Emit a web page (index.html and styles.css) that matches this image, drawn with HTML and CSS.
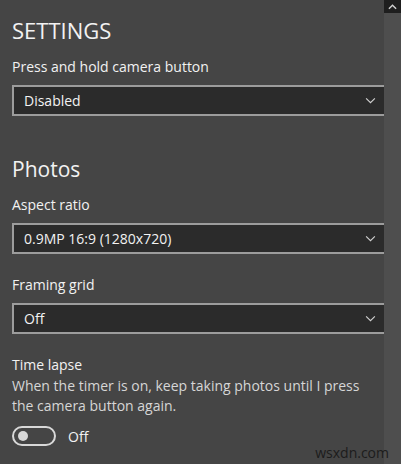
FILE: index.html
```html
<!DOCTYPE html>
<html lang="en">
<head>
    <meta charset="UTF-8">
    <meta name="viewport" content="width=device-width, initial-scale=1.0">
    <title>Camera Settings</title>
    <link rel="stylesheet" href="styles.css">
</head>
<body>

    <div class="window">
        <!-- Settings panel -->
        <div class="panel">
            <h1 class="title">SETTINGS</h1>

            <div class="label">Press and hold camera button</div>
            <div class="dropdown">
                <span>Disabled</span>
                <svg class="chevron" viewBox="0 0 12 8"><path d="M1 1.5 L6 6.5 L11 1.5"/></svg>
            </div>

            <h2 class="section">Photos</h2>

            <div class="label first">Aspect ratio</div>
            <div class="dropdown">
                <span>0.9MP 16:9 (1280x720)</span>
                <svg class="chevron" viewBox="0 0 12 8"><path d="M1 1.5 L6 6.5 L11 1.5"/></svg>
            </div>

            <div class="label spaced">Framing grid</div>
            <div class="dropdown">
                <span>Off</span>
                <svg class="chevron" viewBox="0 0 12 8"><path d="M1 1.5 L6 6.5 L11 1.5"/></svg>
            </div>

            <div class="label spaced">Time lapse</div>
            <p class="desc">When the timer is on, keep taking photos until I press the camera button again.</p>
            <div class="toggle-row">
                <div class="toggle"><div class="knob"></div></div>
                <span>Off</span>
            </div>
        </div>

        <!-- Scrollbar -->
        <div class="scrollbar">
            <div class="scroll-up">
                <svg viewBox="0 0 10 6"><path d="M1 5 L5 1 L9 5"/></svg>
            </div>
        </div>
    </div>

    <div class="watermark">wsxdn.com</div>

</body>
</html>
```

FILE: styles.css
```css
body {
    margin: 0;
    padding: 0;
    background-color: #454545;
    font-family: "Open Sans", "Noto Sans", sans-serif;
    color: #f2f2f2;
    width: 401px;
    height: 464px;
    overflow: hidden;
    position: relative;
}

.window {
    display: flex;
    height: 464px;
}

.panel {
    flex: 1;
    padding: 14px 0 0 12px;
    overflow: hidden;
}

.title {
    margin: 0;
    font-size: 22px;
    font-weight: 400;
    line-height: 32px;
}

.label {
    margin-top: 11px;
    font-size: 14px;
    line-height: 20px;
}

.label.first {
    margin-top: 9px;
}

.label.spaced {
    margin-top: 21px;
}

.dropdown {
    margin-top: 8px;
    height: 27px;
    border: 2px solid #9c9c9c;
    border-right: none;
    background-color: #2b2b2b;
    display: flex;
    align-items: center;
    justify-content: space-between;
    padding-left: 10px;
    font-size: 14px;
}

.chevron {
    width: 11px;
    height: 7px;
    margin-right: 8px;
    fill: none;
    stroke: #d0d0d0;
    stroke-width: 1.3;
}

.section {
    margin: 36px 0 0 0;
    font-size: 21px;
    font-weight: 400;
    line-height: 34px;
}

.desc {
    margin: 1px 0 0 0;
    font-size: 14px;
    line-height: 20px;
    color: #d6d6d6;
    padding-right: 16px;
}

.toggle-row {
    margin-top: 10px;
    display: flex;
    align-items: center;
    gap: 12px;
    font-size: 14px;
}

.toggle {
    box-sizing: border-box;
    width: 44px;
    height: 20px;
    border: 2px solid #d8d8d8;
    border-radius: 10px;
    display: flex;
    align-items: center;
    padding-left: 4px;
}

.knob {
    width: 10px;
    height: 10px;
    border-radius: 50%;
    background-color: #d8d8d8;
}

.scrollbar {
    width: 17px;
    background-color: #4e4e4e;
}

.scroll-up {
    height: 13px;
    background-color: #1e1e1e;
    display: flex;
    align-items: center;
    justify-content: center;
}

.scroll-up svg {
    width: 9px;
    height: 6px;
    fill: none;
    stroke: #cfcfcf;
    stroke-width: 1.6;
}

.watermark {
    position: absolute;
    right: 12px;
    bottom: 2px;
    font-size: 14px;
    color: #1c1c1c;
}
```
